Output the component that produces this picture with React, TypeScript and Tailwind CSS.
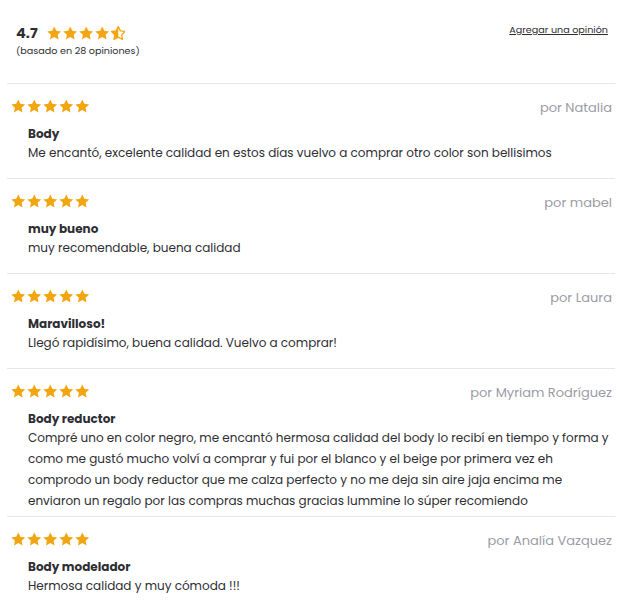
import React from "react";

type Review = {
  author: string;
  title: string;
  body: string;
};

const reviews: Review[] = [
  {
    author: "Natalia",
    title: "Body",
    body: "Me encantó, excelente calidad en estos días vuelvo a comprar otro color son bellisimos",
  },
  {
    author: "mabel",
    title: "muy bueno",
    body: "muy recomendable, buena calidad",
  },
  {
    author: "Laura",
    title: "Maravilloso!",
    body: "Llegó rapidísimo, buena calidad. Vuelvo a comprar!",
  },
  {
    author: "Myriam Rodríguez",
    title: "Body reductor",
    body: "Compré uno en color negro, me encantó hermosa calidad del body lo recibí en tiempo y forma y como me gustó mucho volví a comprar y fui por el blanco y el beige por primera vez eh comprodo un body reductor que me calza perfecto y no me deja sin aire jaja encima me enviaron un regalo por las compras muchas gracias lummine lo súper recomiendo",
  },
  {
    author: "Analía Vazquez",
    title: "Body modelador",
    body: "Hermosa calidad y muy cómoda !!!",
  },
];

const STAR =
  "M12 2.2l2.9 6.2 6.8.8-5 4.6 1.3 6.7L12 17.2l-6 3.3 1.3-6.7-5-4.6 6.8-.8z";

const Star = ({ half = false }: { half?: boolean }) => (
  <svg viewBox="1.8 1.7 20.4 19.4" className="h-[14px] w-[14.5px]">
    {half ? (
      <>
        <defs>
          <clipPath id="half-star">
            <rect x="0" y="0" width="12" height="24" />
          </clipPath>
        </defs>
        <path
          d={STAR}
          fill="none"
          stroke="#f2a50f"
          strokeWidth="1.8"
          strokeLinejoin="round"
        />
        <path d={STAR} fill="#f2a50f" clipPath="url(#half-star)" />
      </>
    ) : (
      <path d={STAR} fill="#f2a50f" />
    )}
  </svg>
);

const Stars = ({ value }: { value: number }) => (
  <div className="flex gap-[1.5px]">
    {[1, 2, 3, 4, 5].map((i) => (
      <Star key={i} half={value < i && value > i - 1} />
    ))}
  </div>
);

const ReviewRow = ({ review }: { review: Review }) => (
  <div className="border-t border-[#e6e6e6] pt-[12px] pb-[5px]">
    <div className="flex items-center justify-between pl-[4px] pr-[3px]">
      <Stars value={5} />
      <span className="relative top-[2px] text-[13px] leading-[20px] text-[#9b9ba6]">
        por {review.author}
      </span>
    </div>
    <div className="pl-[21px] pr-[6px] pt-[9px]">
      <p className="text-[12px] font-bold leading-[17px] text-[#2e2e33]">
        {review.title}
      </p>
      <p className="min-h-[31px] text-[12px] leading-[21px] text-[#2e2e33]">
        {review.body}
      </p>
    </div>
  </div>
);

export default function App() {
  return (
    <div
      className="min-h-screen bg-white"
      style={{ fontFamily: "'Poppins', 'Open Sans', sans-serif" }}
    >
      <div className="ml-[7px] w-[608px]">
        <div className="flex items-start justify-between pl-[9px] pr-[7px] pt-[22px] pb-[25px]">
          <div>
            <div className="flex items-center gap-[9px]">
              <span className="text-[14.5px] font-bold leading-[22px] text-[#2e2e33]">
                4.7
              </span>
              <Stars value={4.7} />
            </div>
            <p className="text-[9.6px] leading-[14px] text-[#2e2e33]">
              (basado en 28 opiniones)
            </p>
          </div>
          <a
            href="#"
            className="mt-[1px] text-[9.6px] leading-[14px] text-[#2e2e33] underline"
          >
            Agregar una opinión
          </a>
        </div>
        {reviews.map((r) => (
          <ReviewRow key={r.author} review={r} />
        ))}
      </div>
    </div>
  );
}
